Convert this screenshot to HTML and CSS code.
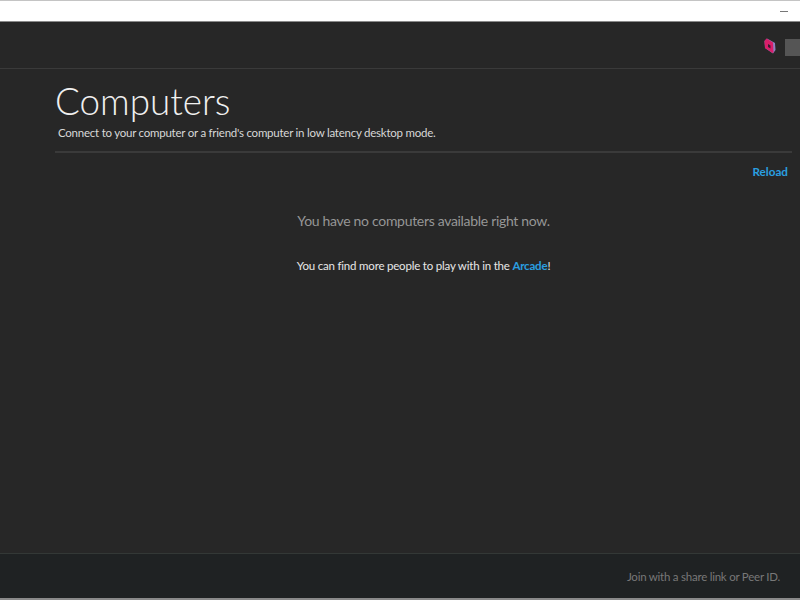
FILE: index.html
```html
<!DOCTYPE html>
<html lang="en">
<head>
<meta charset="utf-8">
<title>Computers</title>
<link rel="stylesheet" href="styles.css">
</head>
<body>
<div class="app">
  <div class="titlebar"><span class="minimize"></span></div>
  <header class="topbar">
    <svg class="logo" width="12" height="16" viewBox="0 0 12 16" aria-hidden="true">
      <path d="M3 0.500 L11 5 L11.500 12 L9 15.500 L1 10 L0.500 3 Z" fill="#8f7fc0"/>
      <path d="M2.500 0.500 L9 4.500 L9.500 14.500 L8.500 15 L1 10 L0.500 3 Z" fill="#d81e6a"/>
      <path d="M4 6 L6.500 7.500 L6.500 10.500 L4 9 Z" fill="#3a1a30"/>
    </svg>
    <span class="avatar"></span>
  </header>
  <main class="content">
    <section class="intro">
      <h1 class="title">Computers</h1>
      <p class="subtitle">Connect to your computer or a friend's computer in low latency desktop mode.</p>
    </section>
    <div class="actions"><a class="link reload">Reload</a></div>
    <p class="empty">You have no computers available right now.</p>
    <p class="hint">You can find more people to play with in the <a class="link">Arcade</a>!</p>
  </main>
  <footer class="footer">Join with a share link or Peer ID.</footer>
</div>
</body>
</html>
```

FILE: styles.css
```css
* { box-sizing: border-box; }
html, body { margin: 0; height: 100%; overflow: hidden; }
body { background: #272727; font-family: "Lato", "Open Sans", sans-serif; }
.app { height: 600px; display: flex; flex-direction: column; }
.titlebar {
  height: 22px; flex: none; background: #fff;
  border-top: 1px solid #c4c4c4; border-bottom: 1px solid #8a8a8a;
  display: flex; align-items: center; justify-content: flex-end; padding-right: 12px;
}
.minimize { width: 8px; height: 1px; background: #777; }
.topbar {
  height: 47px; flex: none;
  border-bottom: 1px solid #3a3a3a;
  display: flex; align-items: center; justify-content: flex-end; gap: 9px;
}
.logo { margin-top: 1px; }
.avatar { width: 15px; height: 17px; background: #555; margin-top: 5px; }
.content { flex: 1; padding: 0 8px 0 55px; }
.intro { border-bottom: 2px solid #3a3a3a; height: 84px; }
.title {
  margin: 0; padding-top: 10px; font-size: 36.800px; line-height: 44px; font-weight: 300;
  color: #f0f0f0;
}
.subtitle {
  margin: 2px 0 0 3px; font-size: 11.500px; letter-spacing: -0.240px; line-height: 16px; color: #d8d8d8;
}
.actions { display: flex; justify-content: flex-end; padding: 10px 4px 0 0; height: 35px; }
.link { color: #2a9fe0; font-weight: 700; }
.reload { font-size: 11.700px; line-height: 16px; }
.empty {
  margin: 0; padding-top: 23px; text-align: center; font-size: 14px; letter-spacing: -0.310px; line-height: 20px; color: #969696;
}
.hint {
  margin: 27px 0 0; text-align: center; font-size: 11.500px; letter-spacing: -0.200px; line-height: 16px; color: #e8e8e8;
}
.footer {
  height: 47px; flex: none; background: #1f2223;
  border-top: 1px solid #333836; border-bottom: 2px solid #8a8a8a;
  display: flex; align-items: center; justify-content: flex-end; padding-right: 20px;
  font-size: 11.500px; letter-spacing: -0.240px; color: #787878;
}
```
